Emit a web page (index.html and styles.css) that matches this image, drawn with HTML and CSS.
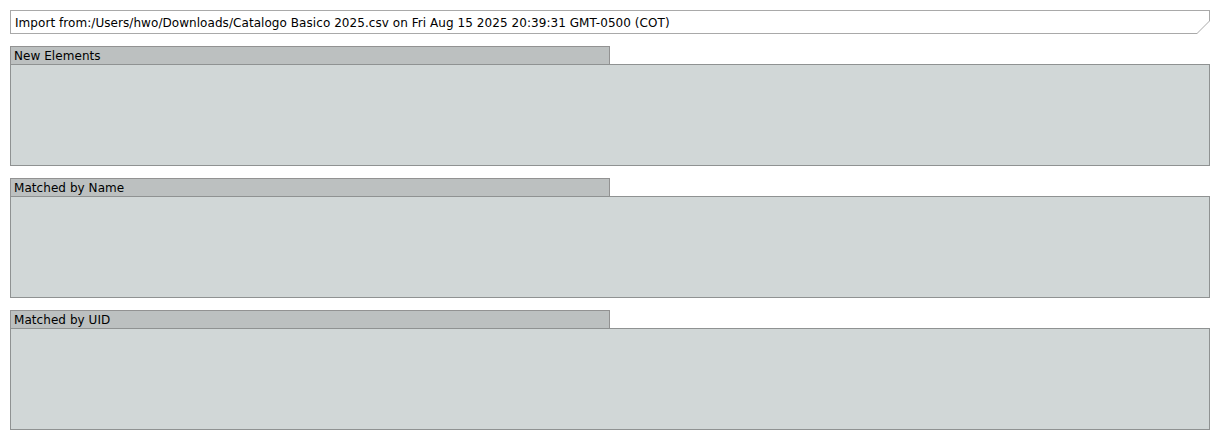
FILE: index.html
```html
<!DOCTYPE html>
<html>
<head>
<meta charset="utf-8">
<link rel="stylesheet" href="styles.css">
</head>
<body>
<div class="page">
  <div class="import-frame">
    <div class="import-box">Import from:/Users/hwo/Downloads/Catalogo Basico 2025.csv on Fri Aug 15 2025 20:39:31 GMT-0500 (COT)</div>
  </div>
  <div class="section">
    <div class="section-title">New Elements</div>
    <div class="section-body"></div>
  </div>
  <div class="section">
    <div class="section-title">Matched by Name</div>
    <div class="section-body"></div>
  </div>
  <div class="section">
    <div class="section-title">Matched by UID</div>
    <div class="section-body"></div>
  </div>
</div>
</body>
</html>
```
FILE: styles.css
```css
html, body {
  margin: 0;
  padding: 0;
  background: #ffffff;
}
.page {
  padding: 10px;
  width: 1200px;
  display: flex;
  flex-direction: column;
  gap: 12px;
  font-family: "DejaVu Sans", sans-serif;
  font-size: 12px;
  letter-spacing: 0.06px;
  color: #000;
}
.import-frame {
  background: #a9a9a9;
  padding: 1px;
  height: 22px;
  clip-path: polygon(0 0, 100% 0, 100% 11px, calc(100% - 13px) 100%, 0 100%);
}
.import-box {
  background: #ffffff;
  height: 22px;
  line-height: 22px;
  padding-top: 1px;
  padding-left: 4px;
  box-sizing: border-box;
  white-space: nowrap;
  clip-path: polygon(0 0, 100% 0, 100% 10px, calc(100% - 12px) 100%, 0 100%);
}
.section {
  display: flex;
  flex-direction: column;
}
.section-title {
  width: 600px;
  box-sizing: border-box;
  height: 18px;
  line-height: 17px;
  padding-top: 1px;
  background: #bcc0c0;
  border: 1px solid #929292;
  border-bottom: none;
  padding-left: 3px;
}
.section-body {
  height: 102px;
  box-sizing: border-box;
  background: #d1d7d7;
  border: 1px solid #8f9292;
}
```
